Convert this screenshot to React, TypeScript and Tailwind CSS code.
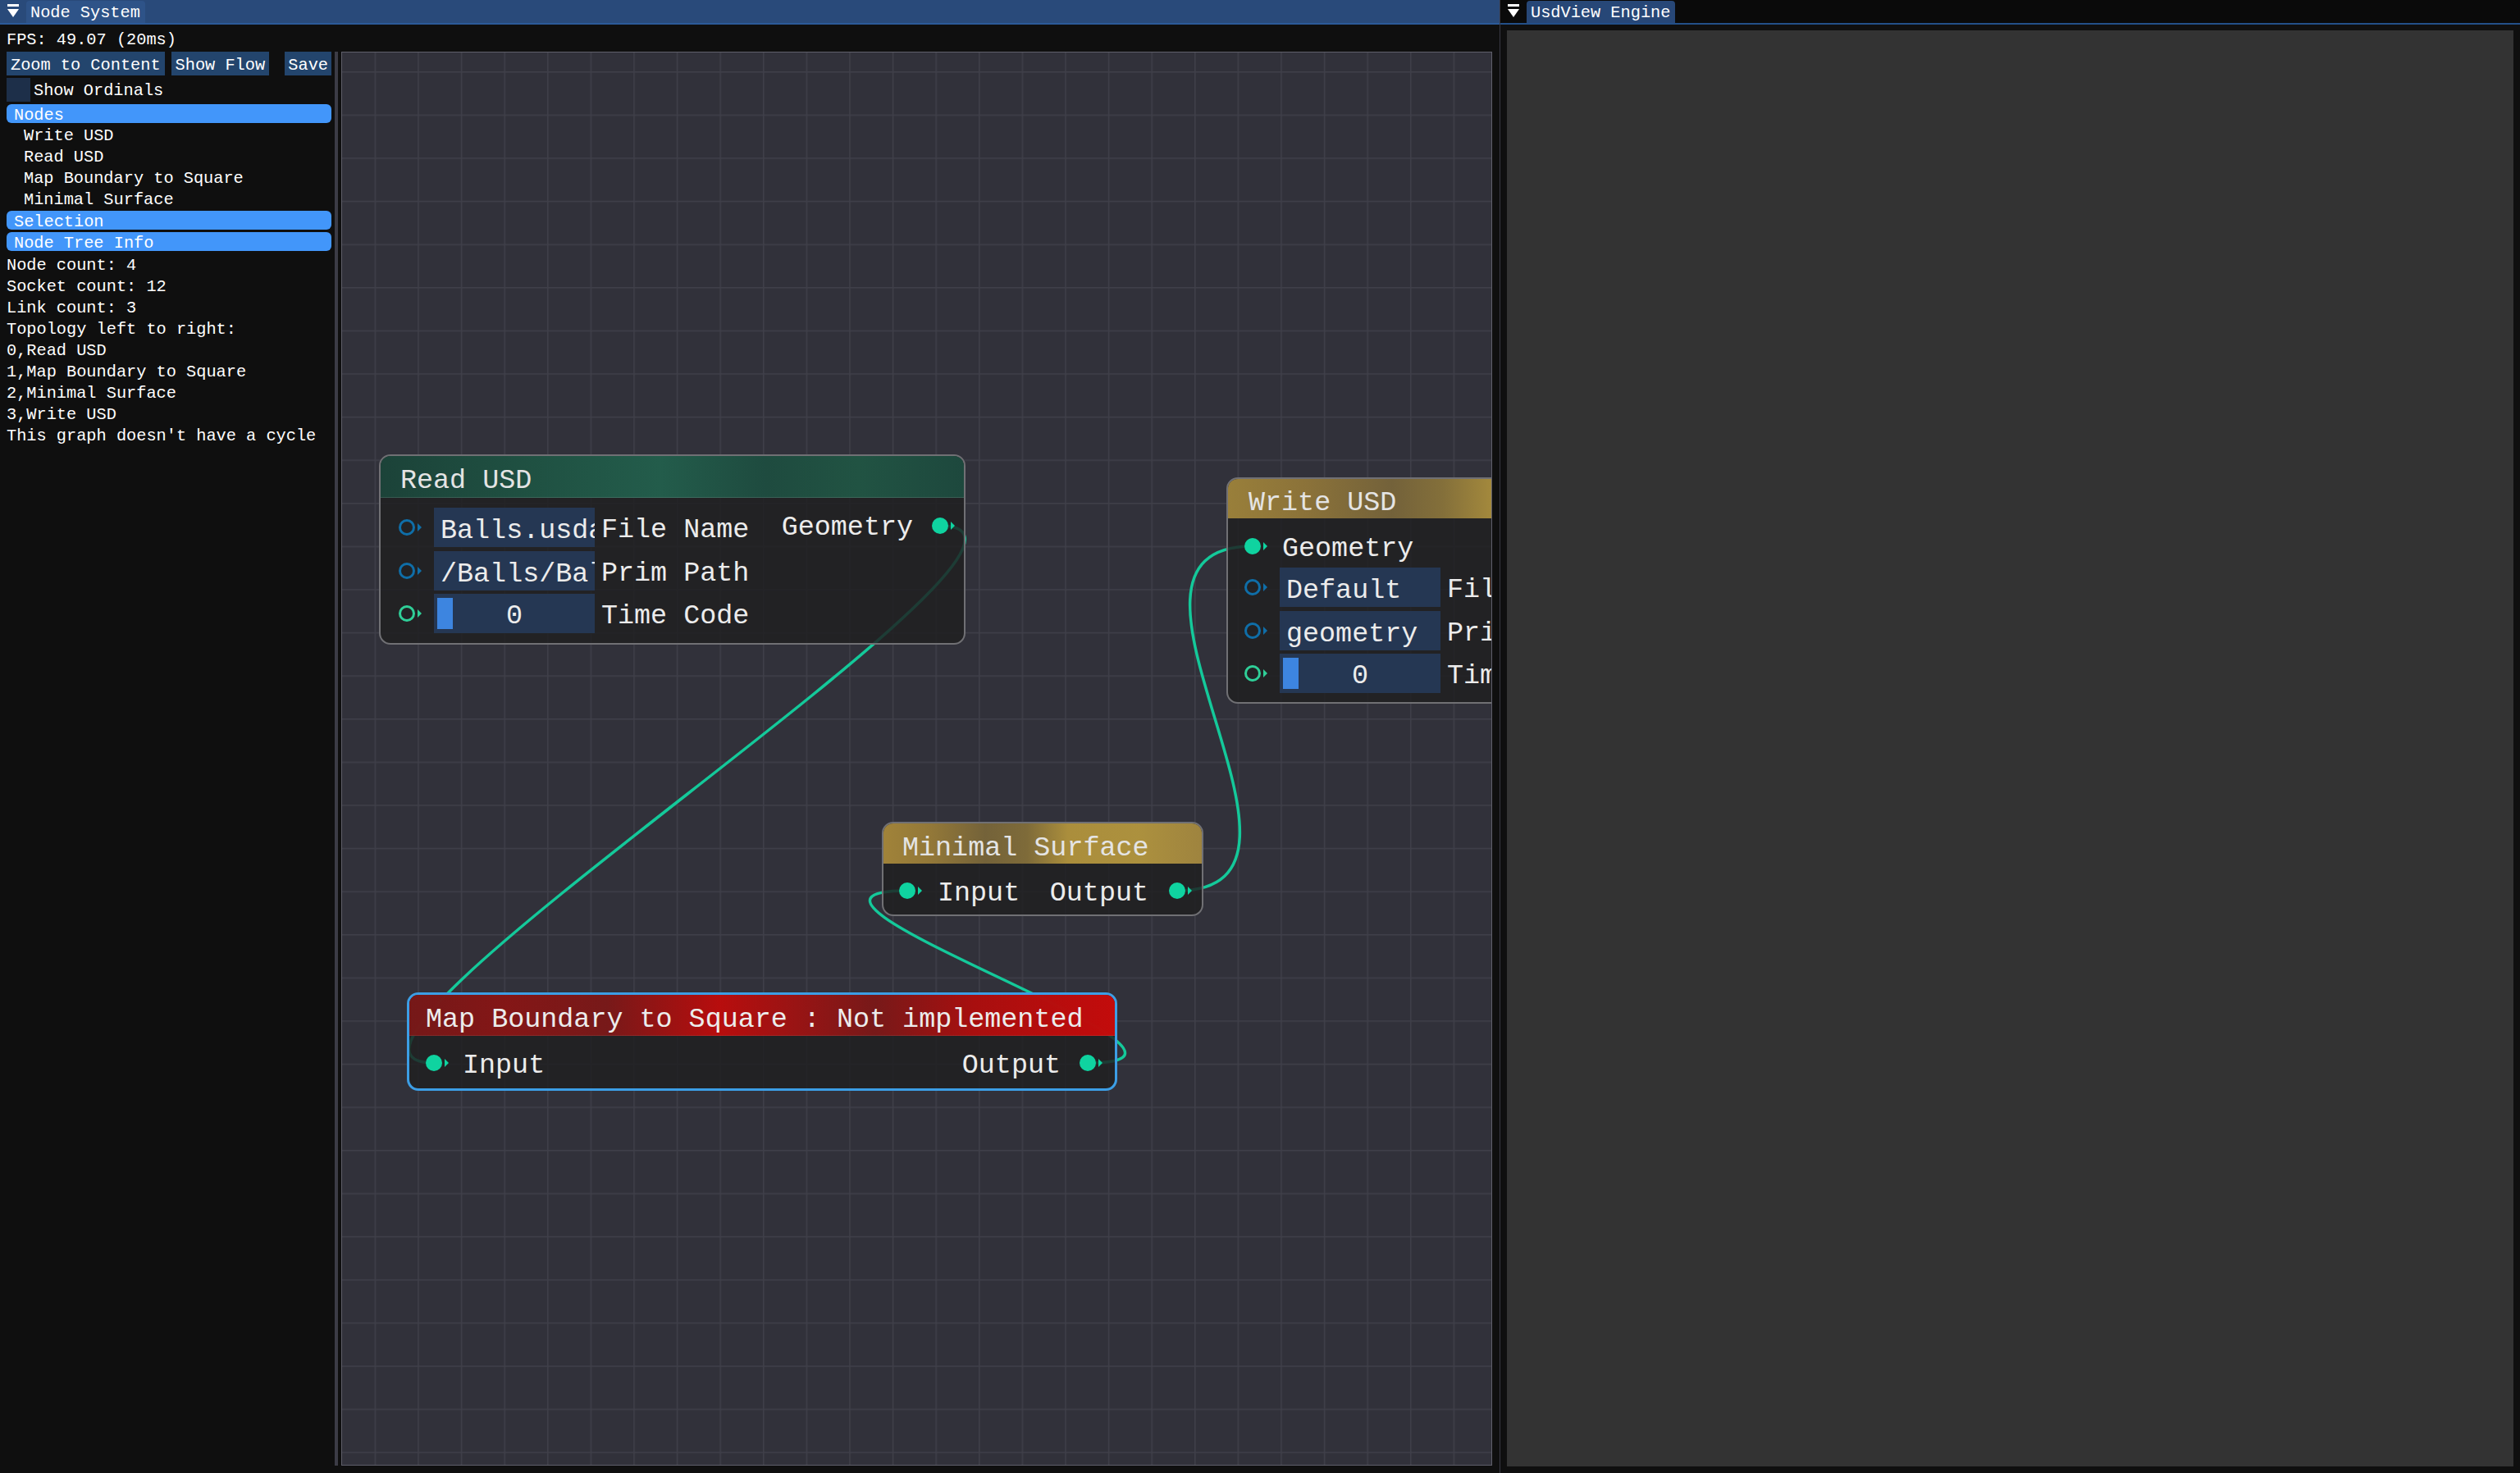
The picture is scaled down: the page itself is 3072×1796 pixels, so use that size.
import React from "react";

type PinKind = "geo" | "str" | "time";

function Pin({ kind }: { kind: PinKind }) {
  const color = kind === "geo" ? "#0fd3a0" : kind === "str" ? "#0f6ea8" : "#2fcf98";
  return (
    <svg width="30" height="20" viewBox="0 0 30 20" className="shrink-0">
      {kind === "geo" ? (
        <circle cx="10" cy="10" r="10" fill={color} />
      ) : (
        <circle cx="10" cy="10" r="8.5" fill="none" stroke={color} strokeWidth="3" />
      )}
      <polygon points="23,5 28,10 23,15" fill={color} />
    </svg>
  );
}

function TitleIcon() {
  return (
    <svg width="14" height="18" viewBox="0 0 14 18">
      <rect x="0" y="0" width="14" height="3" fill="#ffffff" />
      <polygon points="0,6 14,6 7,16" fill="#ffffff" />
    </svg>
  );
}

function TextField({ text }: { text: string }) {
  return (
    <div className="w-[196px] h-[48px] shrink-0 bg-[#253753] overflow-hidden whitespace-nowrap pl-[8px] pt-[8px] leading-[40px]">
      {text}
    </div>
  );
}

function SliderField() {
  return (
    <div className="relative w-[196px] h-[48px] shrink-0 bg-[#253753] flex items-center justify-center">
      <div className="absolute left-[4px] top-[5px] w-[19px] h-[38px] bg-[#3d85e0]" />
      <span className="relative pt-[8px]">0</span>
    </div>
  );
}

function FieldRow({ kind, field, label }: { kind: PinKind; field: React.ReactNode; label: string }) {
  return (
    <div className="h-[48px] flex items-center whitespace-nowrap">
      <Pin kind={kind} />
      <div className="ml-[13px]">{field}</div>
      <span className="ml-[8px] pt-[8px]">{label}</span>
    </div>
  );
}

function Canvas() {
  return (
    <div className="relative flex-1 border border-[#5f5f6a] bg-[#31313a] overflow-hidden text-[33.4px] leading-none text-[#ececec]">
      <svg className="absolute left-0 top-0" width="1401" height="1722">
        <defs>
          <pattern id="grid" x="39.6" y="23" width="52.6" height="52.6" patternUnits="userSpaceOnUse">
            <rect x="0" y="0" width="52.6" height="1.5" fill="#3f3f49" />
            <rect x="0" y="0" width="1.5" height="52.6" fill="#3f3f49" />
          </pattern>
        </defs>
        <rect x="0" y="0" width="1401" height="1722" fill="url(#grid)" />
        <g fill="none" stroke="#14c99a" strokeWidth="3.5" strokeLinecap="round">
          <path d="M729 577 C949 577 -108 1232 112 1232" />
          <path d="M909 1232 C1129 1232 469 1022 689 1022" />
          <path d="M1018 1022 C1238 1022 890 602 1110 602" />
        </g>
      </svg>

      {/* Read USD */}
      <div className="absolute left-[45px] top-[490px] w-[715px] h-[232px] rounded-[14px] border-2 border-[#707074] bg-[#1f1f21d4] overflow-hidden flex flex-col">
        <div className="h-[51px] shrink-0 flex items-center pl-[24px] pt-[12px] border-b border-[#ffffff1f] bg-[linear-gradient(90deg,#1b463be8_0%,#1f5545e8_25%,#23624fe8_48%,#1e4f42e8_66%,#215846e8_82%,#1d4c40e8_100%)] text-[#e4e4e4]">
          Read USD
        </div>
        <div className="flex-1 flex justify-between pl-[22px] pr-[9px] pt-[12px]">
          <div className="flex flex-col gap-[4.5px]">
            <FieldRow kind="str" field={<TextField text="Balls.usda" />} label="File Name" />
            <FieldRow kind="str" field={<TextField text="/Balls/Balls" />} label="Prim Path" />
            <FieldRow kind="time" field={<SliderField />} label="Time Code" />
          </div>
          <div className="h-[44px] flex items-center">
            <span className="pt-[6px]">Geometry</span>
            <div className="ml-[23px]">
              <Pin kind="geo" />
            </div>
          </div>
        </div>
      </div>

      {/* Write USD */}
      <div className="absolute left-[1078px] top-[518px] w-[480px] h-[276px] rounded-[14px] border-2 border-[#707074] bg-[#1f1f21d4] overflow-hidden flex flex-col">
        <div className="h-[48px] shrink-0 flex items-center pl-[25px] pt-[12px] bg-[linear-gradient(90deg,#a3873ceb_0%,#94793beb_20%,#7a673ceb_42%,#8c763ceb_55%,#b5973feb_70%,#b8993feb_100%)] text-[#e4e4e4]">
          Write USD
        </div>
        <div className="flex-1 flex flex-col pl-[20px] pt-[12px]">
          <div className="h-[44px] flex items-center">
            <Pin kind="geo" />
            <span className="ml-[16px] pt-[8px]">Geometry</span>
          </div>
          <div className="mt-[4px] flex flex-col gap-[4.5px]">
            <FieldRow kind="str" field={<TextField text="Default" />} label="File Name" />
            <FieldRow kind="str" field={<TextField text="geometry" />} label="Prim Path" />
            <FieldRow kind="time" field={<SliderField />} label="Time Code" />
          </div>
        </div>
      </div>

      {/* Minimal Surface */}
      <div className="absolute left-[658px] top-[938px] w-[392px] h-[115px] rounded-[14px] border-2 border-[#707074] bg-[#1f1f21d4] overflow-hidden flex flex-col">
        <div className="h-[49px] shrink-0 flex items-center pl-[23px] pt-[12px] bg-[linear-gradient(90deg,#ab8b3beb_0%,#9c7f3aeb_15%,#7b683beb_32%,#86713beb_45%,#b6973eeb_58%,#b89a40eb_80%,#a98c41eb_100%)] text-[#e4e4e4]">
          Minimal Surface
        </div>
        <div className="flex-1 flex justify-between items-start pl-[19px] pr-[10px] pt-[11px]">
          <div className="h-[44px] flex items-center">
            <Pin kind="geo" />
            <span className="ml-[17px] pt-[8px]">Input</span>
          </div>
          <div className="h-[44px] flex items-center">
            <span className="pt-[8px]">Output</span>
            <div className="ml-[25px]">
              <Pin kind="geo" />
            </div>
          </div>
        </div>
      </div>

      {/* Map Boundary to Square */}
      <div className="absolute left-[79px] top-[1146px] w-[866px] h-[120px] rounded-[14px] border-[3px] border-[#3c9ee5] bg-[#1f1f21d4] overflow-hidden flex flex-col">
        <div className="h-[50px] shrink-0 flex items-center pl-[20px] pt-[12px] border-b border-[#ffffff14] bg-[linear-gradient(90deg,#7c1717eb_0%,#8c1515eb_14%,#7e1818eb_28%,#c40b0beb_44%,#a51212eb_54%,#7e1818eb_66%,#b30d0deb_80%,#d00909eb_100%)] text-[#ececec]">
          Map Boundary to Square : Not implemented
        </div>
        <div className="flex-1 flex justify-between items-start pl-[20px] pr-[13px] pt-[11px]">
          <div className="h-[44px] flex items-center">
            <Pin kind="geo" />
            <span className="ml-[15px] pt-[8px]">Input</span>
          </div>
          <div className="h-[44px] flex items-center">
            <span className="pt-[8px]">Output</span>
            <div className="ml-[23px]">
              <Pin kind="geo" />
            </div>
          </div>
        </div>
      </div>
    </div>
  );
}

function SidePanel() {
  const lines = [
    "Node count: 4",
    "Socket count: 12",
    "Link count: 3",
    "Topology left to right:",
    "0,Read USD",
    "1,Map Boundary to Square",
    "2,Minimal Surface",
    "3,Write USD",
    "This graph doesn't have a cycle",
  ];
  return (
    <div className="w-[396px] shrink-0 flex flex-col whitespace-nowrap">
      <div className="h-[29px] flex">
        <div className="h-[29px] px-[5px] bg-[#23456d] leading-[33px]">Zoom to Content</div>
        <div className="h-[29px] ml-[8px] px-[5px] bg-[#23456d] leading-[33px]">Show Flow</div>
        <div className="h-[29px] ml-auto px-[4px] bg-[#23456d] leading-[33px]">Save</div>
      </div>
      <div className="mt-[3px] h-[29px] flex items-center">
        <div className="w-[29px] h-[29px] bg-[#1d2f49]" />
        <span className="ml-[4px] pt-[3px]">Show Ordinals</span>
      </div>
      <div className="mt-[3px] h-[23px] rounded-[6px] bg-[#4296fa] pl-[9px] leading-[27px]">Nodes</div>
      <div className="mt-[1px] flex flex-col pl-[21px]">
        <span className="h-[26px] leading-[30px]">Write USD</span>
        <span className="h-[26px] leading-[30px]">Read USD</span>
        <span className="h-[26px] leading-[30px]">Map Boundary to Square</span>
        <span className="h-[26px] leading-[30px]">Minimal Surface</span>
      </div>
      <div className="mt-[2px] h-[23px] rounded-[6px] bg-[#4296fa] pl-[9px] leading-[27px]">Selection</div>
      <div className="mt-[3px] h-[23px] rounded-[6px] bg-[#4296fa] pl-[9px] leading-[27px]">Node Tree Info</div>
      <div className="mt-[3px] flex flex-col">
        {lines.map((l) => (
          <span key={l} className="h-[26px] leading-[30px]">
            {l}
          </span>
        ))}
      </div>
    </div>
  );
}

export default function App() {
  return (
    <div className="w-[3072px] h-[1796px] flex bg-[#0f0f0f] text-white text-[20.3px] font-['Liberation_Mono','DejaVu_Sans_Mono',monospace] overflow-hidden">
      {/* Left window: Node System */}
      <div className="w-[1828px] h-full shrink-0 flex flex-col">
        <div className="h-[28px] shrink-0 bg-[#294a7a] flex items-end">
          <div className="w-[32px] h-full flex items-center justify-center">
            <TitleIcon />
          </div>
          <div className="h-[27px] pl-[5px] pr-[6px] rounded-t-[4px] bg-[#2e5388] leading-[29px]">Node System</div>
        </div>
        <div className="h-[2px] shrink-0 bg-[#2c5a98]" />
        <div className="flex-1 min-h-0 flex flex-col pl-[8px] pr-[9px] pt-[4px] pb-[9px]">
          <div className="h-[26px] leading-[30px]">FPS: 49.07 (20ms)</div>
          <div className="mt-[3px] flex-1 min-h-0 flex">
            <SidePanel />
            <div className="ml-[4px] w-[4px] shrink-0 bg-[#3c3c46]" />
            <div className="ml-[4px] flex-1 flex">
              <Canvas />
            </div>
          </div>
        </div>
      </div>

      <div className="w-[1px] h-full shrink-0 bg-[#3a3a44]" />

      {/* Right window: UsdView Engine */}
      <div className="flex-1 h-full flex flex-col">
        <div className="h-[28px] shrink-0 bg-[#0a0a0a] flex items-end">
          <div className="w-[32px] h-full flex items-center justify-center">
            <TitleIcon />
          </div>
          <div className="h-[27px] pl-[5px] pr-[6px] rounded-t-[4px] bg-[#274777] leading-[29px]">UsdView Engine</div>
        </div>
        <div className="h-[2px] shrink-0 bg-[#234f88]" />
        <div className="flex-1 min-h-0 flex px-[8px] pt-[7px] pb-[8px]">
          <div className="flex-1 bg-[#333333]" />
        </div>
      </div>
    </div>
  );
}
